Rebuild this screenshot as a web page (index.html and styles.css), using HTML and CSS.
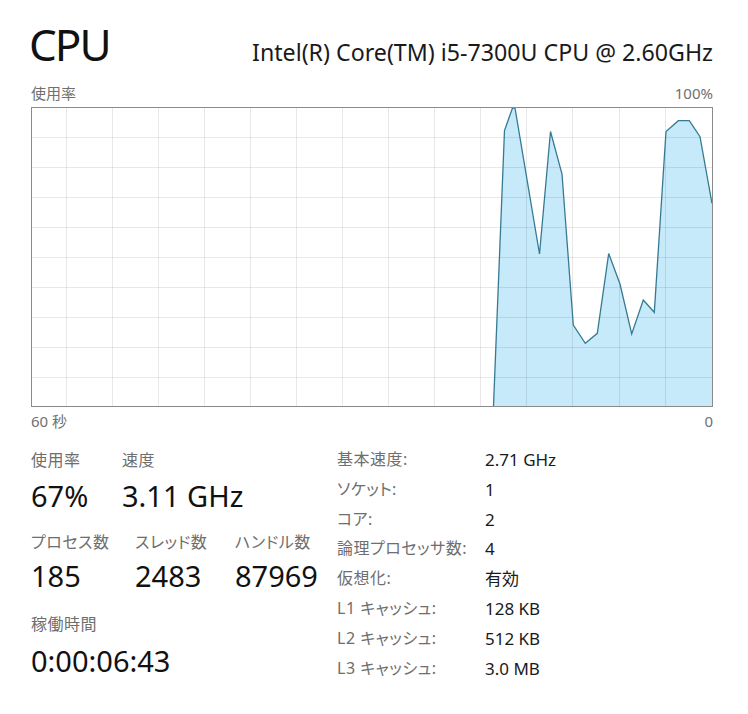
FILE: index.html
```html
<!DOCTYPE html>
<html lang="ja">
<head>
<meta charset="utf-8">
<title>CPU</title>
<link rel="stylesheet" href="styles.css">
</head>
<body>
<div class="page">
  <div class="header">
    <div class="title">CPU</div>
    <div class="cpu-name">Intel(R) Core(TM) i5-7300U CPU @ 2.60GHz</div>
  </div>
  <div class="axis-row axis-top">
    <span>使用率</span>
    <span>100%</span>
  </div>
  <div class="graph">
    <svg width="680" height="298" viewBox="0 0 680 298">
      <polygon class="fill" points="461.5,298 472.5,22.5 480.5,0 483,0 507.5,146 518.5,23.5 530,66 541.3,217 553.3,235.3 565.3,225.3 576.7,145.5 588,176 599.7,226 611.3,192 622.3,204.3 634,23.5 646.3,12.7 657.3,12.7 668,28.7 680,95.3 680,298"/>
      <g class="grid">
        <line x1="0" y1="29.5" x2="680" y2="29.5"/>
        <line x1="0" y1="59.5" x2="680" y2="59.5"/>
        <line x1="0" y1="89.5" x2="680" y2="89.5"/>
        <line x1="0" y1="119.5" x2="680" y2="119.5"/>
        <line x1="0" y1="149.5" x2="680" y2="149.5"/>
        <line x1="0" y1="179.5" x2="680" y2="179.5"/>
        <line x1="0" y1="209.5" x2="680" y2="209.5"/>
        <line x1="0" y1="239.5" x2="680" y2="239.5"/>
        <line x1="0" y1="269.5" x2="680" y2="269.5"/>
        <line x1="34.5" y1="0" x2="34.5" y2="298"/>
        <line x1="80.5" y1="0" x2="80.5" y2="298"/>
        <line x1="126.5" y1="0" x2="126.5" y2="298"/>
        <line x1="172.5" y1="0" x2="172.5" y2="298"/>
        <line x1="218.5" y1="0" x2="218.5" y2="298"/>
        <line x1="264.5" y1="0" x2="264.5" y2="298"/>
        <line x1="310.5" y1="0" x2="310.5" y2="298"/>
        <line x1="356.5" y1="0" x2="356.5" y2="298"/>
        <line x1="402.5" y1="0" x2="402.5" y2="298"/>
        <line x1="448.5" y1="0" x2="448.5" y2="298"/>
        <line x1="494.5" y1="0" x2="494.5" y2="298"/>
        <line x1="540.5" y1="0" x2="540.5" y2="298"/>
        <line x1="587.5" y1="0" x2="587.5" y2="298"/>
        <line x1="633.5" y1="0" x2="633.5" y2="298"/>
      </g>
      <polyline class="line" points="461.5,298 472.5,22.5 480.5,0 483,0 507.5,146 518.5,23.5 530,66 541.3,217 553.3,235.3 565.3,225.3 576.7,145.5 588,176 599.7,226 611.3,192 622.3,204.3 634,23.5 646.3,12.7 657.3,12.7 668,28.7 680,95.3"/>
    </svg>
  </div>
  <div class="axis-row axis-bottom">
    <span>60 秒</span>
    <span>0</span>
  </div>
  <div class="stats">
    <div class="dynamic">
      <div class="row row-1">
        <div class="stat">
          <div class="label">使用率</div>
          <div class="value">67%</div>
        </div>
        <div class="stat">
          <div class="label">速度</div>
          <div class="value">3.11 GHz</div>
        </div>
      </div>
      <div class="row row-2">
        <div class="stat">
          <div class="label">プロセス数</div>
          <div class="value">185</div>
        </div>
        <div class="stat">
          <div class="label">スレッド数</div>
          <div class="value">2483</div>
        </div>
        <div class="stat">
          <div class="label">ハンドル数</div>
          <div class="value">87969</div>
        </div>
      </div>
      <div class="row row-3">
        <div class="stat">
          <div class="label">稼働時間</div>
          <div class="value">0:00:06:43</div>
        </div>
      </div>
    </div>
    <div class="static">
      <div class="k">基本速度:</div><div class="v">2.71 GHz</div>
      <div class="k">ソケット:</div><div class="v">1</div>
      <div class="k">コア:</div><div class="v">2</div>
      <div class="k">論理プロセッサ数:</div><div class="v">4</div>
      <div class="k">仮想化:</div><div class="v">有効</div>
      <div class="k">L1 キャッシュ:</div><div class="v">128 KB</div>
      <div class="k">L2 キャッシュ:</div><div class="v">512 KB</div>
      <div class="k">L3 キャッシュ:</div><div class="v">3.0 MB</div>
    </div>
  </div>
</div>
</body>
</html>
```

FILE: styles.css
```css
html, body {
  margin: 0;
  padding: 0;
  background: #ffffff;
}

body {
  font-family: "Noto Sans", "Noto Sans CJK JP", sans-serif;
  color: #1a1a1a;
}

.page {
  width: 682px;
  padding: 22px 0 0 31px;
}

.header {
  display: flex;
  justify-content: space-between;
  align-items: baseline;
  height: 45px;
}

.title {
  font-size: 44px;
  line-height: 45px;
  letter-spacing: -2px;
  margin-left: -2px;
  color: #111;
}

.cpu-name {
  font-size: 23.2px;
  line-height: 23px;
  color: #1a1a1a;
}

.axis-row {
  display: flex;
  justify-content: space-between;
  font-size: 15px;
  line-height: 20px;
  height: 20px;
  color: #707070;
}

.axis-top {
  margin-top: 16px;
}

.axis-bottom {
  margin-top: 4px;
}

.graph {
  margin-top: 4px;
  width: 680px;
  height: 298px;
  border: 1px solid #8a8a8a;
}

.graph svg {
  display: block;
}

.fill {
  fill: #c6eaf9;
}

.grid line {
  stroke: rgba(0, 0, 0, 0.09);
  stroke-width: 1;
}

.line {
  fill: none;
  stroke: #367a92;
  stroke-width: 1.3;
  stroke-linejoin: miter;
}

.stats {
  display: grid;
  grid-template-columns: 306px 1fr;
}

.row {
  display: flex;
}

.row-1 {
  margin-top: 18px;
}

.row-1 .stat:first-child {
  width: 91px;
}

.row-2 {
  margin-top: 17px;
}

.row-2 .stat:nth-child(1) {
  width: 104px;
}

.row-2 .stat:nth-child(2) {
  width: 100px;
}

.row-3 {
  margin-top: 19px;
}

.label {
  font-size: 16px;
  line-height: 22px;
  color: #6e6e6e;
  font-feature-settings: "palt";
  letter-spacing: 0.5px;
}

.value {
  font-size: 29px;
  line-height: 36px;
  color: #111;
  white-space: nowrap;
}

.row-1 .value {
  margin-top: 7px;
}

.row-2 .value {
  margin-top: 5px;
}

.row-3 .value {
  margin-top: 8px;
}

.static {
  display: grid;
  grid-template-columns: 148px 1fr;
  grid-auto-rows: 29.8px;
  margin-top: 14px;
  line-height: 29.8px;
}

.k {
  font-size: 16px;
  color: #6e6e6e;
  white-space: nowrap;
  font-feature-settings: "palt";
  letter-spacing: 0.5px;
}

.v {
  font-size: 17px;
  color: #1a1a1a;
  white-space: nowrap;
}
```
